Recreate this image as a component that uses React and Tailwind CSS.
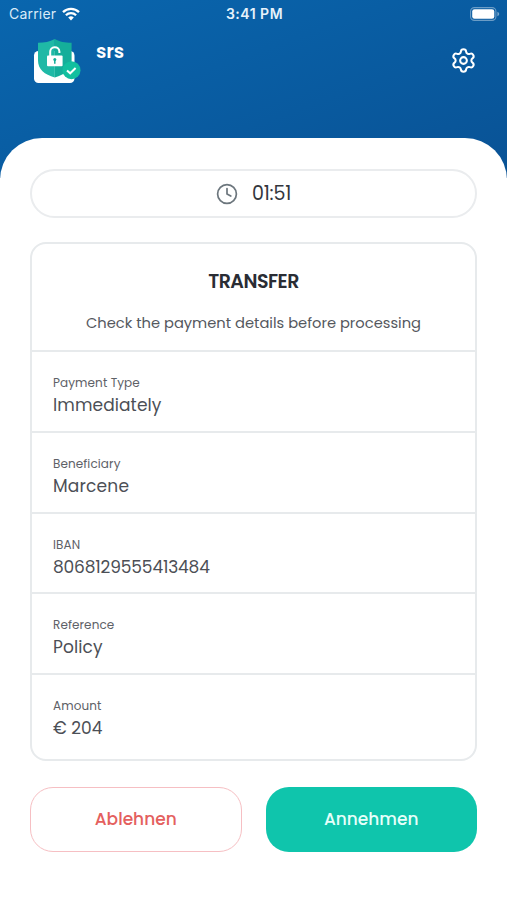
import { Settings } from 'lucide-react';

const details = [
    { label: 'Payment Type', value: 'Immediately', row: 'h-[81px] border-b-2', valueStyle: 'tracking-[0.1px]' },
    { label: 'Beneficiary', value: 'Marcene', row: 'h-[81px] border-b-2', valueStyle: 'tracking-[0.2px]' },
    { label: 'IBAN', value: '8068129555413484', row: 'h-[80px] border-b-2', valueStyle: 'tracking-[-0.15px]' },
    { label: 'Reference', value: 'Policy', row: 'h-[81px] border-b-2', valueStyle: 'tracking-[0.1px]' },
    { label: 'Amount', value: '€ 204', row: 'h-[84px]', valueStyle: 'tracking-[0px]' },
];

function WifiIcon() {
    return (
        <svg className="w-[18px] h-[14px]" viewBox="0 0 18 14" fill="none" stroke="#fff" strokeWidth="2.3">
            <path d="M1 5.1a11.4 11.4 0 0 1 16 0" />
            <path d="M3.9 8.2a7.3 7.3 0 0 1 10.2 0" />
            <path d="M9 13.4 6.2 10.6a4 4 0 0 1 5.6 0Z" fill="#fff" stroke="none" />
        </svg>
    );
}

function BatteryIcon() {
    return (
        <svg className="w-[30px] h-[14px]" viewBox="0 0 30 14" fill="none">
            <rect x="0.6" y="0.6" width="25.3" height="12.8" rx="3.8" stroke="#fff" strokeOpacity="0.4" strokeWidth="1.1" />
            <rect x="2.2" y="2.2" width="22.1" height="9.6" rx="2.3" fill="#fff" />
            <path d="M27.4 4.8c1.2.5 1.8 1.2 1.8 2.2s-.6 1.7-1.8 2.2Z" fill="#fff" fillOpacity="0.45" />
        </svg>
    );
}

function Logo() {
    return (
        <svg className="w-[48px] h-[46px]" viewBox="0 0 48 46" fill="none">
            <rect x="1" y="12" width="40.5" height="32" rx="4.5" fill="#fff" />
            <path d="M21.8 0C16.5 2.9 11.5 3.8 5 3.8v17.6C5 30 11.5 35.5 21.8 38.5V0Z" fill="#1fb9a6" />
            <path d="M21.8 0C27 2.9 31.5 3.8 38.6 3.8v17.6c0 8.6-6.5 14.1-16.8 17.1V0Z" fill="#15ae9a" />
            <rect x="14" y="16.5" width="15.6" height="10.8" rx="1" fill="#fff" />
            <path d="M17.2 17v-4a4.6 4.6 0 0 1 9.2-.5v1.5" stroke="#fff" strokeWidth="2" />
            <circle cx="21.8" cy="20.6" r="1.5" fill="#15ae9a" />
            <path d="M21.8 21v3.8" stroke="#15ae9a" strokeWidth="1.5" />
            <circle cx="38.5" cy="31.2" r="9" fill="#12bf9f" />
            <path d="m34 31.4 3.2 2.9 5.4-5.3" stroke="#fff" strokeWidth="2" />
        </svg>
    );
}

function ClockIcon() {
    return (
        <svg className="w-[22px] h-[22px]" viewBox="0 0 22 22" fill="none" stroke="#6c767d" strokeWidth="1.7" strokeLinecap="round" strokeLinejoin="round">
            <circle cx="11" cy="11" r="9.4" />
            <path d="M11 5.5V11l3.8 2" />
        </svg>
    );
}

export default function App() {
    return (
        <div className="w-full h-[900px] bg-white overflow-hidden font-['Poppins','Inter','Liberation_Sans',sans-serif] antialiased">
            <header className="h-[178px] bg-linear-[160deg] from-[#0966ae] to-[#095295] text-white">
                <div className="h-[27px] grid grid-cols-3 items-center pl-[9px] pr-[7px] text-[14px] font-['Inter','Liberation_Sans',sans-serif]">
                    <div className="flex items-center gap-[6px] text-[#d9ebf8]">
                        <span className="tracking-[0.2px]">Carrier</span>
                        <WifiIcon />
                    </div>
                    <span className="text-center font-semibold tracking-[0.5px] text-[#e6f2fb]">3:41 PM</span>
                    <div className="flex justify-end"><BatteryIcon /></div>
                </div>

                <div className="flex items-start pl-[33px] pr-[30px] pt-[12px]">
                    <Logo />
                    <h1 className="ml-[15px] mt-px text-[19px] leading-[24px] font-semibold tracking-[-0.1px]">srs</h1>
                    <button className="ml-auto mt-[8px]" aria-label="Settings">
                        <Settings size={27} strokeWidth={1.8} />
                    </button>
                </div>
            </header>

            <main className="h-[762px] -mt-[40px] px-[30px] pt-[31px] bg-white rounded-t-[42px]">
                <div className="h-[49px] flex items-center justify-center gap-[14px] rounded-full border-2 border-[#eaecee]">
                    <ClockIcon />
                    <span className="pt-[2px] text-[19px] text-[#33363d] tracking-[-0.2px]">01:51</span>
                </div>

                <section className="mt-[24px] h-[519px] rounded-[16px] border-2 border-[#e7eaec]">
                    <div className="h-[108px] border-b-2 border-[#e7eaec] text-center">
                        <h2 className="pt-[26px] text-[19px] leading-[24px] font-semibold text-[#2a2d34] tracking-[-0.5px]">TRANSFER</h2>
                        <p className="mt-[19px] text-[14.7px] leading-[20px] text-[#55585e]">Check the payment details before processing</p>
                    </div>

                    {details.map((item) => (
                        <div key={item.label} className={`${item.row} border-[#e7eaec] pl-[21px] pt-[22px]`}>
                            <div className="text-[12px] leading-[18px] text-[#5e6167] tracking-[0.1px]">{item.label}</div>
                            <div className={`mt-[1px] text-[17px] leading-[24px] text-[#4c4f56] ${item.valueStyle}`}>{item.value}</div>
                        </div>
                    ))}
                </section>

                <div className="mt-[26px] grid grid-cols-2 gap-[24px] text-[17px] font-medium">
                    <button className="h-[65px] rounded-[23px] border border-[#f6bfc3] text-[#e4605e]">Ablehnen</button>
                    <button className="h-[65px] rounded-[23px] bg-[#0fc5ac] text-[#e6fffa]">Annehmen</button>
                </div>
            </main>
        </div>
    );
}
